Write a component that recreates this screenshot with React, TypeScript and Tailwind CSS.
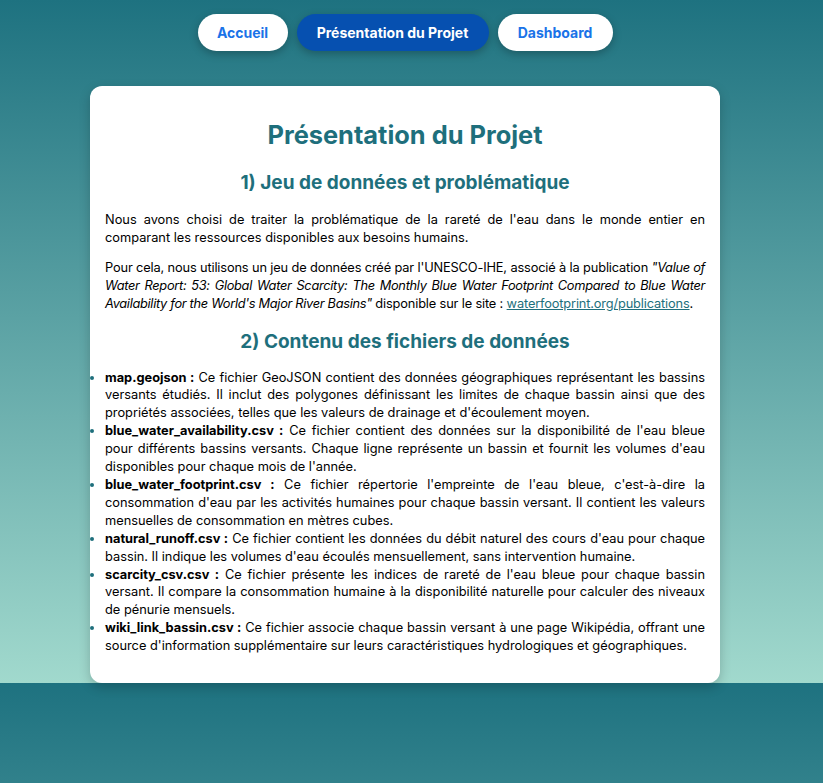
import { FC } from "react";

const files = [
  {
    name: "map.geojson :",
    text: "Ce fichier GeoJSON contient des données géographiques représentant les bassins versants étudiés. Il inclut des polygones définissant les limites de chaque bassin ainsi que des propriétés associées, telles que les valeurs de drainage et d'écoulement moyen.",
  },
  {
    name: "blue_water_availability.csv :",
    text: "Ce fichier contient des données sur la disponibilité de l'eau bleue pour différents bassins versants. Chaque ligne représente un bassin et fournit les volumes d'eau disponibles pour chaque mois de l'année.",
  },
  {
    name: "blue_water_footprint.csv :",
    text: "Ce fichier répertorie l'empreinte de l'eau bleue, c'est-à-dire la consommation d'eau par les activités humaines pour chaque bassin versant. Il contient les valeurs mensuelles de consommation en mètres cubes.",
  },
  {
    name: "natural_runoff.csv :",
    text: "Ce fichier contient les données du débit naturel des cours d'eau pour chaque bassin. Il indique les volumes d'eau écoulés mensuellement, sans intervention humaine.",
  },
  {
    name: "scarcity_csv.csv :",
    text: "Ce fichier présente les indices de rareté de l'eau bleue pour chaque bassin versant. Il compare la consommation humaine à la disponibilité naturelle pour calculer des niveaux de pénurie mensuels.",
  },
  {
    name: "wiki_link_bassin.csv :",
    text: "Ce fichier associe chaque bassin versant à une page Wikipédia, offrant une source d'information supplémentaire sur leurs caractéristiques hydrologiques et géographiques.",
  },
];

const NavButton: FC<{ label: string; width: string; active?: boolean }> = ({ label, width, active }) => (
  <button
    className={
      (active
        ? "bg-[#0650b0] text-white "
        : "bg-white text-[#1a73e8] ") +
      width +
      " h-[37px] rounded-full text-[14px] font-bold shadow-[0_3px_8px_rgba(0,0,0,0.25)]"
    }
  >
    {label}
  </button>
);

export default function App() {
  return (
    <div className="min-h-[783px] w-full bg-[linear-gradient(to_bottom,#1e7280,#a1d9cd)] bg-[length:100%_683px] bg-repeat-y font-['Inter',sans-serif]">
      <div className="w-[810px] flex flex-col items-center pt-[14px]">
        <nav className="flex gap-[9px]">
          <NavButton label="Accueil" width="w-[90px]" />
          <NavButton label="Présentation du Projet" width="w-[192px]" active />
          <NavButton label="Dashboard" width="w-[115px]" />
        </nav>
        <main className="mt-[35px] w-[630px] bg-white rounded-[12px] shadow-[0_4px_12px_rgba(0,0,0,0.2)] px-[15px] pt-[33px] pb-[28px] text-[12.8px] leading-[17.9px] text-black">
          <h1 className="text-center text-[25.4px] leading-[32px] font-bold text-[#1e6f7c]">Présentation du Projet</h1>
          <h2 className="mt-[20px] text-center text-[19px] leading-[24px] font-bold text-[#1e6f7c]">1) Jeu de données et problématique</h2>
          <p className="mt-[16px] text-justify">
            Nous avons choisi de traiter la problématique de la rareté de l'eau dans le monde entier en comparant les ressources disponibles aux besoins humains.
          </p>
          <p className="mt-[12px] text-justify tracking-[-0.15px]">
            Pour cela, nous utilisons un jeu de données créé par l'UNESCO-IHE, associé à la publication{" "}
            <em className="tracking-[-0.3px]">"Value of Water Report: 53: Global Water Scarcity: The Monthly Blue Water Footprint Compared to Blue Water Availability for the World's Major River Basins"</em>{" "}
            disponible sur le site :{" "}
            <a className="text-[#1e6f7c] underline">waterfootprint.org/publications</a>.
          </p>
          <h2 className="mt-[17px] text-center text-[19px] leading-[24px] font-bold text-[#1e6f7c]">2) Contenu des fichiers de données</h2>
          <ul className="mt-[15px] list-disc marker:text-[#1e6f7c] text-justify">
            {files.map((f) => (
              <li key={f.name}>
                <strong className="font-bold">{f.name}</strong> {f.text}
              </li>
            ))}
          </ul>
        </main>
      </div>
    </div>
  );
}
